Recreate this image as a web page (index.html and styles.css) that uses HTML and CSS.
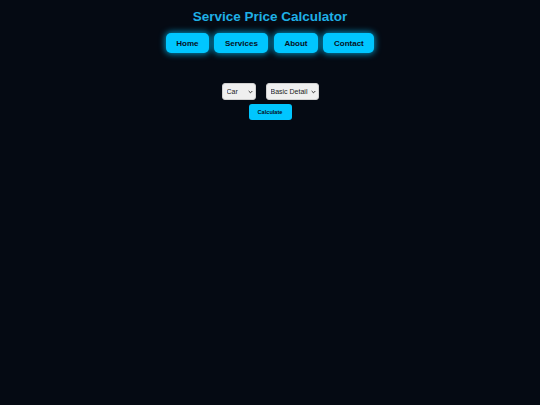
FILE: index.html
```html
<!DOCTYPE html>
<html>
<head>
<meta charset="utf-8">
<link rel="stylesheet" href="styles.css">
</head>
<body>
<header class="header">
  <h1 class="title">Service Price Calculator</h1>
  <nav class="nav">
    <button class="nav-btn">Home</button>
    <button class="nav-btn">Services</button>
    <button class="nav-btn">About</button>
    <button class="nav-btn">Contact</button>
  </nav>
</header>
<main class="calc">
  <div class="selects">
    <span class="sel-wrap">
      <select class="sel sel-car"><option>Car</option></select>
      <svg class="chev" viewBox="0 0 6 4" width="5" height="4"><path d="M0.8 0.8 L3 3 L5.2 0.8" fill="none" stroke="#222" stroke-width="1.1"/></svg>
    </span>
    <span class="sel-wrap">
      <select class="sel sel-pkg"><option>Basic Detail</option></select>
      <svg class="chev" viewBox="0 0 6 4" width="5" height="4"><path d="M0.8 0.8 L3 3 L5.2 0.8" fill="none" stroke="#222" stroke-width="1.1"/></svg>
    </span>
  </div>
  <button class="calc-btn">Calculate</button>
</main>
</body>
</html>
```
FILE: styles.css
```css
html, body {
  margin: 0;
  padding: 0;
  background: #050a13;
  height: 100%;
  font-family: "Liberation Sans", Arial, sans-serif;
}
.header {
  display: flex;
  flex-direction: column;
  align-items: center;
  padding-top: 8px;
}
.title {
  margin: 0;
  font-size: 13.5px;
  font-weight: bold;
  color: #1fb0e6;
  line-height: 17px;
}
.nav {
  display: flex;
  gap: 5.5px;
  margin-top: 8px;
}
.nav-btn {
  height: 20px;
  border: none;
  border-radius: 5px;
  background: #00c6ff;
  color: #07101c;
  font-family: "Liberation Sans", Arial, sans-serif;
  font-weight: bold;
  font-size: 8px;
  padding: 0 10.5px;
  box-shadow: 0 0 6px 1px rgba(0, 198, 255, 0.7);
}
.calc {
  display: flex;
  flex-direction: column;
  align-items: center;
  margin-top: 30px;
}
.selects {
  display: flex;
  gap: 10px;
}
.sel-wrap {
  position: relative;
  display: inline-block;
  height: 17px;
}
.sel {
  appearance: none;
  -webkit-appearance: none;
  height: 17px;
  font-size: 7px;
  font-family: "Liberation Sans", Arial, sans-serif;
  border: 1px solid #d0d0d0;
  border-radius: 3px;
  background: #efefef;
  color: #222;
  padding: 0 0 0 4px;
  margin: 0;
  display: block;
}
.chev {
  position: absolute;
  right: 3px;
  top: 7px;
  pointer-events: none;
}
.sel-car { width: 34px; }
.sel-pkg { width: 53px; }
.calc-btn {
  margin-top: 4px;
  height: 16px;
  width: 43px;
  border: none;
  border-radius: 3px;
  background: #00c6ff;
  color: #07101c;
  font-family: "Liberation Sans", Arial, sans-serif;
  font-weight: bold;
  font-size: 5.6px;
  padding: 0;
}
```
